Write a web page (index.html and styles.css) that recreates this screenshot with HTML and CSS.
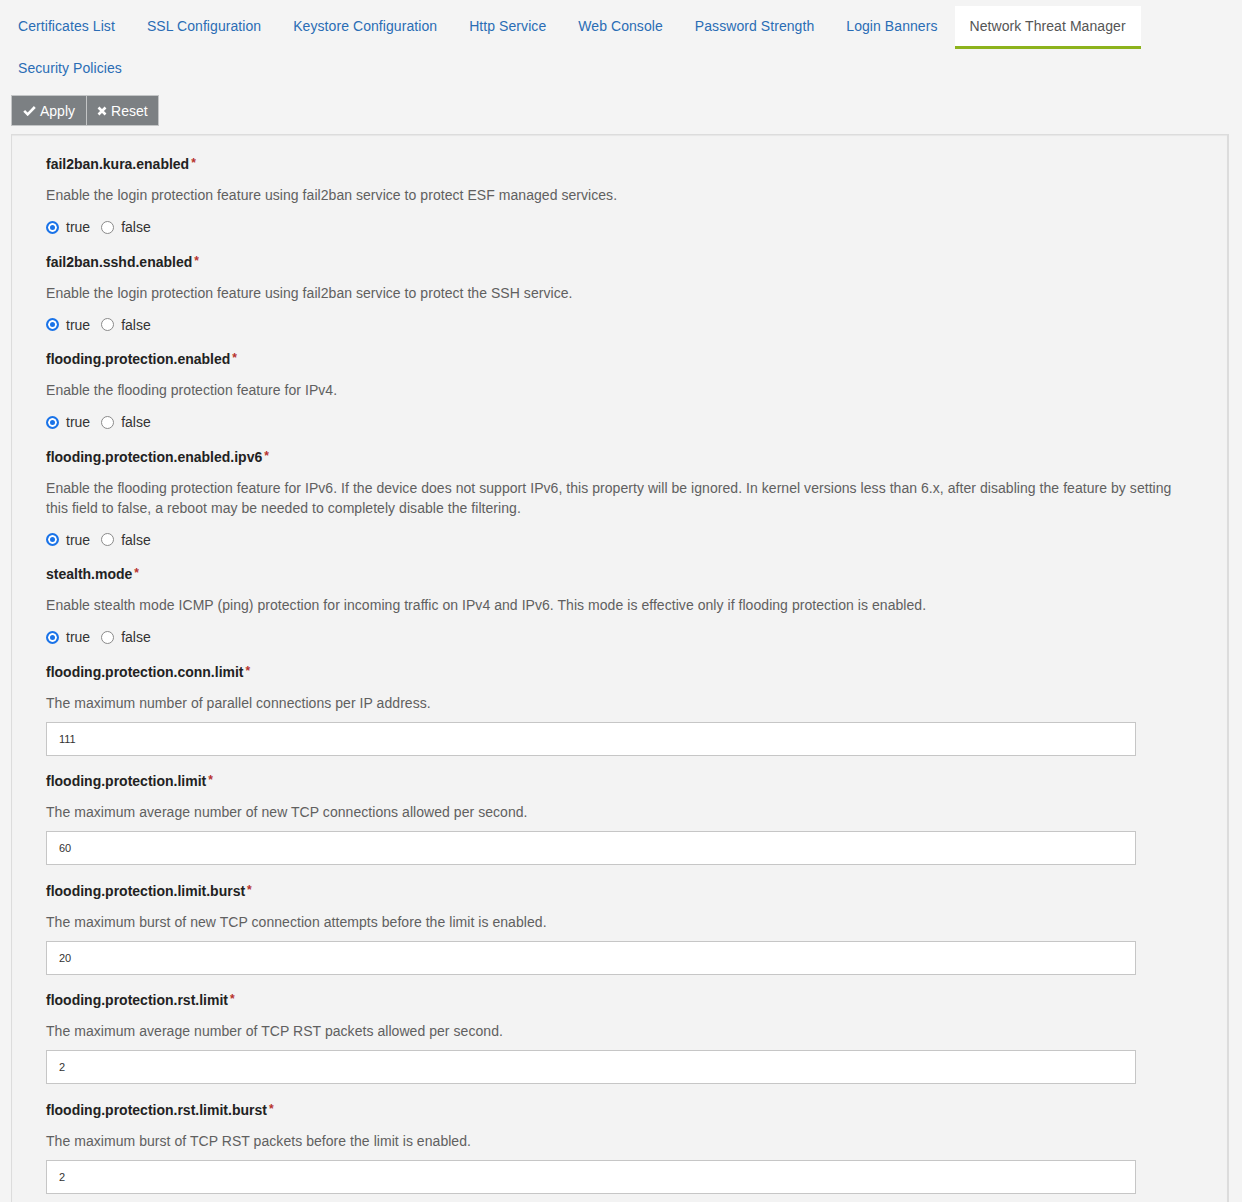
FILE: index.html
```html
<!DOCTYPE html>
<html>
<head>
<meta charset="utf-8">
<link rel="stylesheet" href="styles.css">
</head>
<body>
<ul class="tabs">
  <li><a>Certificates List</a></li>
  <li><a>SSL Configuration</a></li>
  <li><a>Keystore Configuration</a></li>
  <li><a>Http Service</a></li>
  <li><a>Web Console</a></li>
  <li><a>Password Strength</a></li>
  <li><a>Login Banners</a></li>
  <li class="active"><a>Network Threat Manager</a></li>
  <li><a>Security Policies</a></li>
</ul>
<div class="toolbar">
  <button class="btn btn-apply"><svg class="ico" viewBox="0 0 14 12" width="13" height="11"><path d="M1.2 6.4 L5 10.2 L12.8 2.2" fill="none" stroke="#fff" stroke-width="2.8" stroke-linejoin="miter"/></svg>Apply</button>
  <button class="btn"><svg class="ico" viewBox="0 0 10 10" width="10" height="10"><path d="M1.5 1.5 L8.5 8.5 M8.5 1.5 L1.5 8.5" fill="none" stroke="#fff" stroke-width="2.6"/></svg>Reset</button>
</div>
<div class="panel">
  <div class="field">
    <div class="label">fail2ban.kura.enabled<span class="req">*</span></div>
    <div class="desc">Enable the login protection feature using fail2ban service to protect ESF managed services.</div>
    <div class="radios"><label><input type="radio" name="r1" checked>true</label><label><input type="radio" name="r1">false</label></div>
  </div>
  <div class="field">
    <div class="label">fail2ban.sshd.enabled<span class="req">*</span></div>
    <div class="desc">Enable the login protection feature using fail2ban service to protect the SSH service.</div>
    <div class="radios"><label><input type="radio" name="r2" checked>true</label><label><input type="radio" name="r2">false</label></div>
  </div>
  <div class="field">
    <div class="label">flooding.protection.enabled<span class="req">*</span></div>
    <div class="desc">Enable the flooding protection feature for IPv4.</div>
    <div class="radios"><label><input type="radio" name="r3" checked>true</label><label><input type="radio" name="r3">false</label></div>
  </div>
  <div class="field">
    <div class="label">flooding.protection.enabled.ipv6<span class="req">*</span></div>
    <div class="desc">Enable the flooding protection feature for IPv6. If the device does not support IPv6, this property will be ignored. In kernel versions less than 6.x, after disabling the feature by setting this field to false, a reboot may be needed to completely disable the filtering.</div>
    <div class="radios"><label><input type="radio" name="r4" checked>true</label><label><input type="radio" name="r4">false</label></div>
  </div>
  <div class="field">
    <div class="label">stealth.mode<span class="req">*</span></div>
    <div class="desc">Enable stealth mode ICMP (ping) protection for incoming traffic on IPv4 and IPv6. This mode is effective only if flooding protection is enabled.</div>
    <div class="radios"><label><input type="radio" name="r5" checked>true</label><label><input type="radio" name="r5">false</label></div>
  </div>
  <div class="field text">
    <div class="label">flooding.protection.conn.limit<span class="req">*</span></div>
    <div class="desc">The maximum number of parallel connections per IP address.</div>
    <input class="input" type="text" value="111">
  </div>
  <div class="field text">
    <div class="label">flooding.protection.limit<span class="req">*</span></div>
    <div class="desc">The maximum average number of new TCP connections allowed per second.</div>
    <input class="input" type="text" value="60">
  </div>
  <div class="field text">
    <div class="label">flooding.protection.limit.burst<span class="req">*</span></div>
    <div class="desc">The maximum burst of new TCP connection attempts before the limit is enabled.</div>
    <input class="input" type="text" value="20">
  </div>
  <div class="field text">
    <div class="label">flooding.protection.rst.limit<span class="req">*</span></div>
    <div class="desc">The maximum average number of TCP RST packets allowed per second.</div>
    <input class="input" type="text" value="2">
  </div>
  <div class="field text">
    <div class="label">flooding.protection.rst.limit.burst<span class="req">*</span></div>
    <div class="desc">The maximum burst of TCP RST packets before the limit is enabled.</div>
    <input class="input" type="text" value="2">
  </div>
</div>
</body>
</html>
```
FILE: styles.css
```css
* { box-sizing: border-box; }
html, body { margin: 0; padding: 0; }
body {
  background: #f4f4f4;
  font-family: "Liberation Sans", Arial, sans-serif;
  font-size: 14px;
  color: #333;
  height: 1202px;
  overflow: hidden;
}
.tabs {
  list-style: none;
  margin: 0;
  padding: 6px 3px 0 3px;
  display: flex;
  flex-wrap: wrap;
  width: 1160px;
}
.tabs li { margin: 0 2px -1px 0; }
.tabs a {
  display: block;
  padding: 10px 15px;
  line-height: 20px;
  height: 43px;
  color: #2a6db5;
  letter-spacing: 0.07px;
  border-bottom: 3px solid transparent;
  cursor: pointer;
}
.tabs li.active a {
  background: #fff;
  color: #555;
  border-bottom-color: #8db31c;
}
.toolbar {
  display: flex;
  margin: 5px 0 0 11px;
}
.btn {
  display: flex;
  align-items: center;
  gap: 4px;
  height: 31px;
  padding: 0 10px;
  background: #7c8083;
  color: #fff;
  border: 1px solid #c3c5c6;
  font-family: inherit;
  font-size: 14px;
  margin: 0;
}
.btn-apply { padding: 0 11px; }
.btn + .btn { border-left: none; }
.ico { display: block; }
.panel {
  margin: 8px 13px 0 11px;
  border: 1px solid #dcdcdc;
  border-right-width: 2px;
  box-shadow: inset 0 1px 1px #e6e6e6;
  background: #f3f3f3;
  padding: 19px 30px 0 34px;
  height: 1200px;
}
.field { margin-bottom: 14.6px; }
.field.text { margin-bottom: 15.5px; }
.label {
  font-weight: bold;
  line-height: 20px;
  height: 20px;
  color: #222;
}
.req {
  color: #b7312c;
  font-weight: bold;
  font-size: 12px;
  line-height: 1;
  margin-left: 2px;
  position: relative;
  top: -2px;
}
.desc {
  margin-top: 11px;
  line-height: 20px;
  color: #606060;
  letter-spacing: 0.05px;
  max-width: 1150px;
}
.radios {
  margin-top: 12px;
  height: 20px;
  display: flex;
  align-items: center;
  color: #333;
}
.radios label {
  display: flex;
  align-items: center;
  margin-right: 11px;
}
.radios input {
  -webkit-appearance: none;
  appearance: none;
  width: 13px;
  height: 13px;
  margin: 0 7px 0 0;
  border: 1px solid #8a8a8a;
  border-radius: 50%;
  background: #fff;
}
.radios input:checked {
  background: #1a73e8;
  border: 2px solid #1a73e8;
  box-shadow: inset 0 0 0 2px #fff;
}
.input {
  display: block;
  margin-top: 9px;
  width: 1090px;
  height: 34px;
  border: 1px solid #c6c6c6;
  background: #fff;
  padding: 0 12px;
  font-family: inherit;
  font-size: 11px;
  color: #333;
  outline: none;
}
```
